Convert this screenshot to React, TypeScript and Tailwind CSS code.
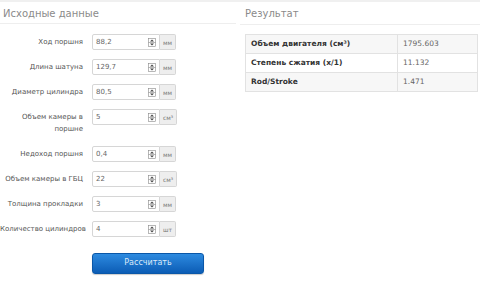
import React from 'react'

const rows = [
  { label: 'Ход поршня', value: '88,2', unit: 'мм' },
  { label: 'Длина шатуна', value: '129,7', unit: 'мм' },
  { label: 'Диаметр цилиндра', value: '80,5', unit: 'мм' },
  { label: 'Объем камеры в поршне', value: '5', unit: 'см³', tall: true },
  { label: 'Недоход поршня', value: '0,4', unit: 'мм' },
  { label: 'Объем камеры в ГБЦ', value: '22', unit: 'см³' },
  { label: 'Толщина прокладки', value: '3', unit: 'мм' },
  { label: 'Количество цилиндров', value: '4', unit: 'шт' },
]

const results = [
  { name: 'Объем двигателя (см³)', value: '1795.603' },
  { name: 'Степень сжатия (x/1)', value: '11.132' },
  { name: 'Rod/Stroke', value: '1.471' },
]

const Spinner = () => (
  <svg width="8" height="9" viewBox="0 0 8 9" className="shrink-0">
    <rect x="0.5" y="0.5" width="7" height="8" fill="none" stroke="#888" strokeWidth="0.6" />
    <path d="M2 3.6 L4 1.6 L6 3.6 Z" fill="#444" />
    <path d="M2 5.4 L4 7.4 L6 5.4 Z" fill="#444" />
    <line x1="0.5" y1="4.5" x2="7.5" y2="4.5" stroke="#888" strokeWidth="0.6" />
  </svg>
)

const App = () => {
  return (
    <div className="w-[480px] h-[282px] bg-white overflow-hidden border-t-2 border-[#f0f0f0] font-['DejaVu_Sans',sans-serif] flex">
      {/* левая колонка */}
      <div className="w-[236px] shrink-0">
        <div className="h-[22px] pl-[3px] pt-[5px] border-b border-[#eeeeee] text-[10px] leading-[13px] text-[#8a8a8a]">
          Исходные данные
        </div>

        <div className="mt-[10px] flex flex-col gap-[9px]">
          {rows.map((r) => (
            <div key={r.label} className={`flex items-start ${r.tall ? 'h-[28px]' : 'h-[16px]'}`}>
              <div className="w-[83px] shrink-0 text-right text-[7px] leading-[12px] pt-[2px] whitespace-nowrap text-[#555]">
                {r.label === 'Объем камеры в поршне' ? (
                  <>Объем камеры в<br />поршне</>
                ) : (
                  r.label
                )}
              </div>
              <div className="ml-[9px] flex h-[16px]">
                <div className="w-[68px] h-full flex items-center justify-between pl-[3px] pr-[3px] border border-[#d6d6d6] rounded-l-[2px] bg-white text-[7px] text-[#666]">
                  <span>{r.value}</span>
                  <Spinner />
                </div>
                <div className="h-full px-[3px] flex items-center bg-[#eeeeee] border border-l-0 border-[#d6d6d6] rounded-r-[2px] text-[6px] text-[#777]">
                  {r.unit}
                </div>
              </div>
            </div>
          ))}
        </div>

        <div className="mt-[11px] ml-[92px]">
          <button className="w-[112px] h-[21px] rounded-[3px] bg-gradient-to-b from-[#2d8be0] to-[#0b5cb5] border border-[#0a57a8] text-[8px] text-[#dce9f8] shadow-[0_1px_1px_rgba(0,0,0,0.2)]">
            Рассчитать
          </button>
        </div>
      </div>

      {/* правая колонка */}
      <div className="flex-1 pl-[4px]">
        <div className="h-[23px] pl-[5px] pt-[5px] border-b border-[#eeeeee] text-[10px] leading-[13px] text-[#8a8a8a]">
          Результат
        </div>
        <table className="mt-[9px] ml-[5px] w-[233px] border-collapse border border-[#e2e2e2] text-[7.5px]">
          <tbody>
            {results.map((r, i) => (
              <tr key={r.name} className={`h-[19px] ${i % 2 === 0 ? 'bg-[#f7f7f7]' : 'bg-white'}`}>
                <td className="w-[152px] pl-[5px] border border-[#e2e2e2] font-bold text-[#333]">{r.name}</td>
                <td className="pl-[5px] border border-[#e2e2e2] text-[#666]">{r.value}</td>
              </tr>
            ))}
          </tbody>
        </table>
      </div>
    </div>
  )
}

export default App
